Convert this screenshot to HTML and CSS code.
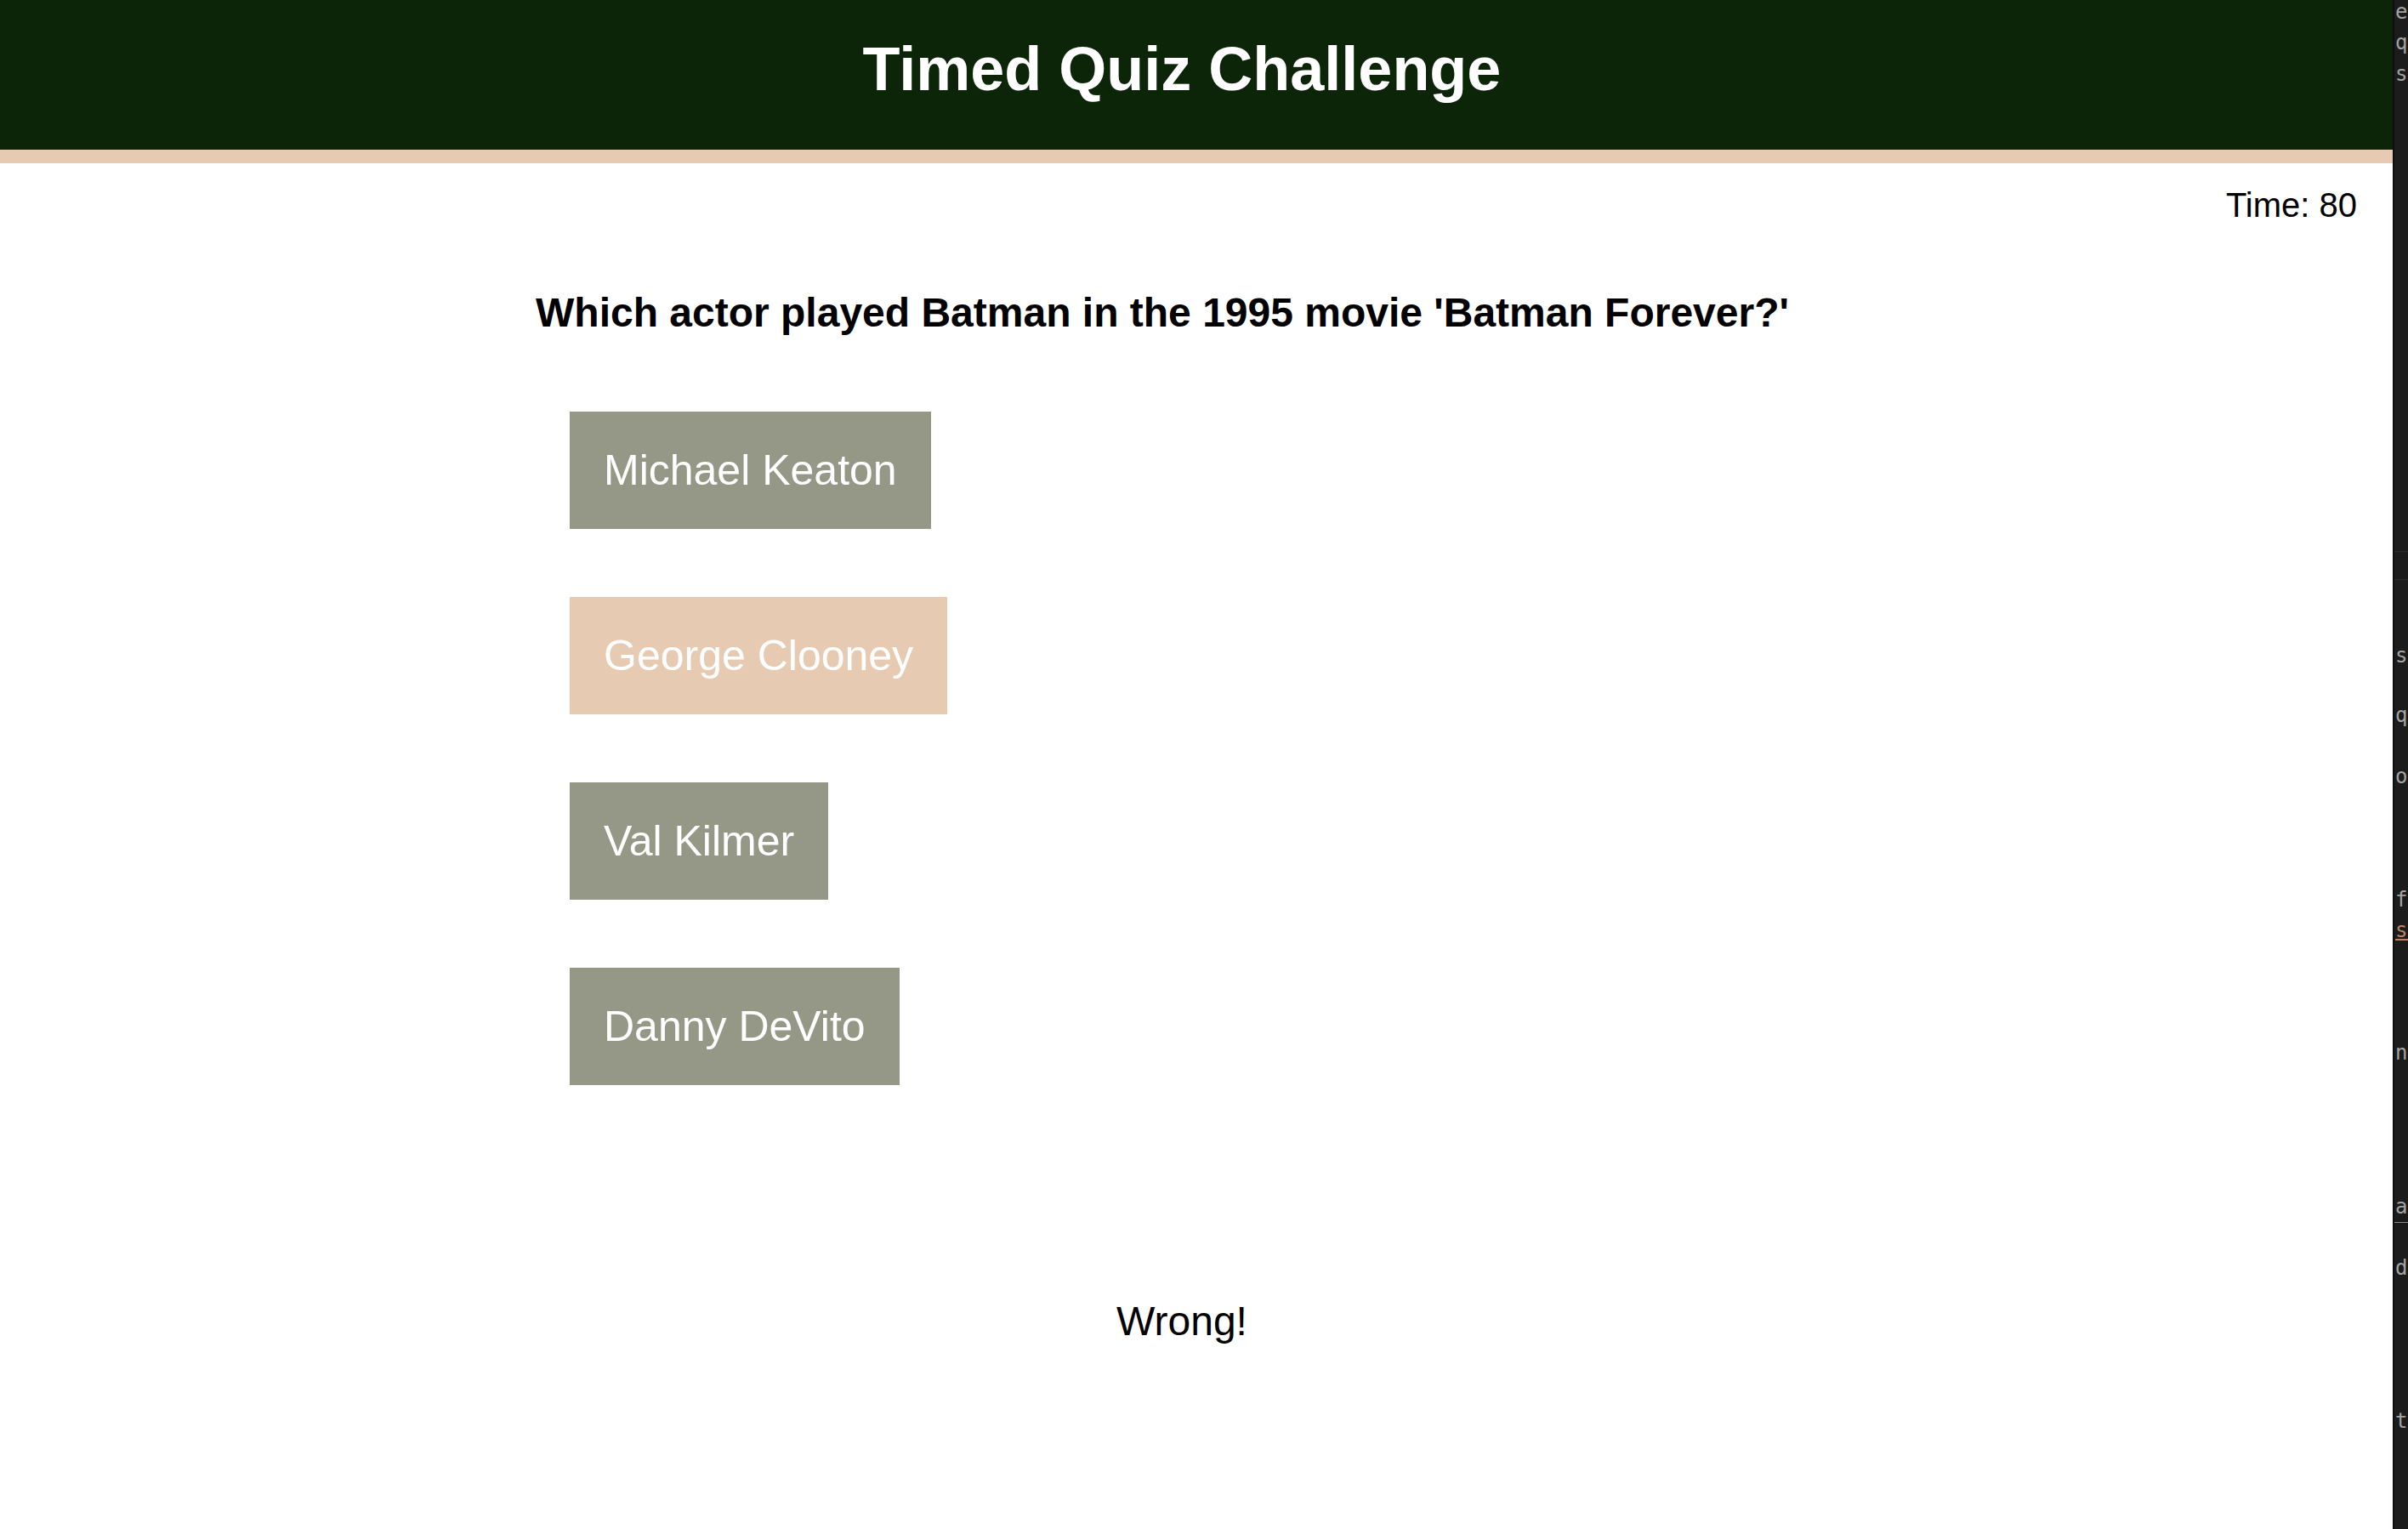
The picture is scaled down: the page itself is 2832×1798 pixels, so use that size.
FILE: index.html
```html
<!DOCTYPE html>
<html lang="en">
<head>
<meta charset="utf-8">
<title>Timed Quiz Challenge</title>
<link rel="stylesheet" href="styles.css">
</head>
<body>
<div class="page">
  <main class="app">
    <header class="site-header">
      <h1 class="site-title">Timed Quiz Challenge</h1>
    </header>
    <div class="timer">Time: 80</div>
    <section class="quiz">
      <h2 class="question">Which actor played Batman in the 1995 movie 'Batman Forever?'</h2>
      <ul class="choices">
        <li><button class="choice">Michael Keaton</button></li>
        <li><button class="choice choice--hover">George Clooney</button></li>
        <li><button class="choice">Val Kilmer</button></li>
        <li><button class="choice">Danny DeVito</button></li>
      </ul>
    </section>
    <p class="feedback">Wrong!</p>
  </main>
  <aside class="devtools">
    <div class="dt-line dt-l1">e</div>
    <div class="dt-line dt-l2">qu</div>
    <div class="dt-line dt-l3">se</div>
    <div class="dt-band"></div>
    <div class="dt-line dt-l4">s</div>
    <div class="dt-line dt-l5">qu</div>
    <div class="dt-line dt-l6">o</div>
    <div class="dt-line dt-l7">f</div>
    <div class="dt-line dt-l8"><span class="dt-link">se</span></div>
    <div class="dt-line dt-l9">nu</div>
    <div class="dt-line dt-l10 dt-rule">ar</div>
    <div class="dt-line dt-l11">de</div>
    <div class="dt-line dt-l12">t</div>
  </aside>
</div>
</body>
</html>
```

FILE: styles.css
```css
html, body {
  margin: 0;
  padding: 0;
}

body {
  font-family: "Liberation Sans", Arial, Helvetica, sans-serif;
  background: #ffffff;
  color: #000000;
}

.page {
  display: flex;
  height: 1798px;
  overflow: hidden;
}

.app {
  flex: 1;
  min-width: 0;
}

.site-header {
  background: #0c2407;
  border-bottom: 16px solid #e6cbb2;
  padding: 40px 34px 53px 0;
  text-align: center;
}

.site-title {
  margin: 0;
  font-size: 72px;
  line-height: 83px;
  font-weight: bold;
  color: #ffffff;
}

.timer {
  text-align: right;
  font-size: 40px;
  line-height: 46px;
  padding: 26px 42px 0 0;
}

.quiz {
  width: 1554px;
  margin: 76px auto 0;
}

.question {
  margin: 0;
  font-size: 48px;
  line-height: 55px;
  font-weight: bold;
}

.choices {
  list-style: none;
  margin: 89px 0 0;
  padding: 0 0 0 40px;
  display: flex;
  flex-direction: column;
  align-items: flex-start;
  gap: 80px;
}

.choices li {
  margin: 0;
  padding: 0;
}

.choice {
  display: block;
  font-family: "Liberation Sans", Arial, Helvetica, sans-serif;
  font-size: 50px;
  line-height: 58px;
  padding: 40px;
  margin: 0;
  border: none;
  background: #959886;
  color: #ffffff;
  cursor: pointer;
}

.choice--hover {
  background: #e6cbb2;
}

.feedback {
  margin: 250px 0 0;
  padding-right: 34px;
  text-align: center;
  font-size: 48px;
  line-height: 55px;
}

.devtools {
  width: 16px;
  flex: none;
  background: #1c1c1c;
  border-left: 2px solid #0e0e0e;
  overflow: hidden;
  white-space: nowrap;
  font-family: "DejaVu Sans Mono", "Liberation Mono", monospace;
  font-size: 24px;
  color: #a3a3a3;
}

.dt-line {
  height: 36px;
  line-height: 36px;
  padding-left: 1px;
}

.dt-l1 { margin-top: -4px; }
.dt-l2 { margin-top: 0; }
.dt-l3 { margin-top: 1px; }
.dt-band {
  margin-top: 543px;
  height: 32px;
  border-top: 1px solid #2c2c2c;
  border-bottom: 1px solid #2c2c2c;
}
.dt-l4 { margin-top: 71px; }
.dt-l5 { margin-top: 34px; }
.dt-l6 { margin-top: 36px; }
.dt-l7 { margin-top: 109px; }
.dt-l8 { margin-top: 0; }
.dt-l9 { margin-top: 108px; }
.dt-l10 { margin-top: 145px; }
.dt-l11 { margin-top: 35px; }
.dt-l12 { margin-top: 144px; }

.dt-link {
  color: #b7836a;
  text-decoration: underline;
}

.dt-rule {
  border-bottom: 1px solid #8a8a8a;
}
```
